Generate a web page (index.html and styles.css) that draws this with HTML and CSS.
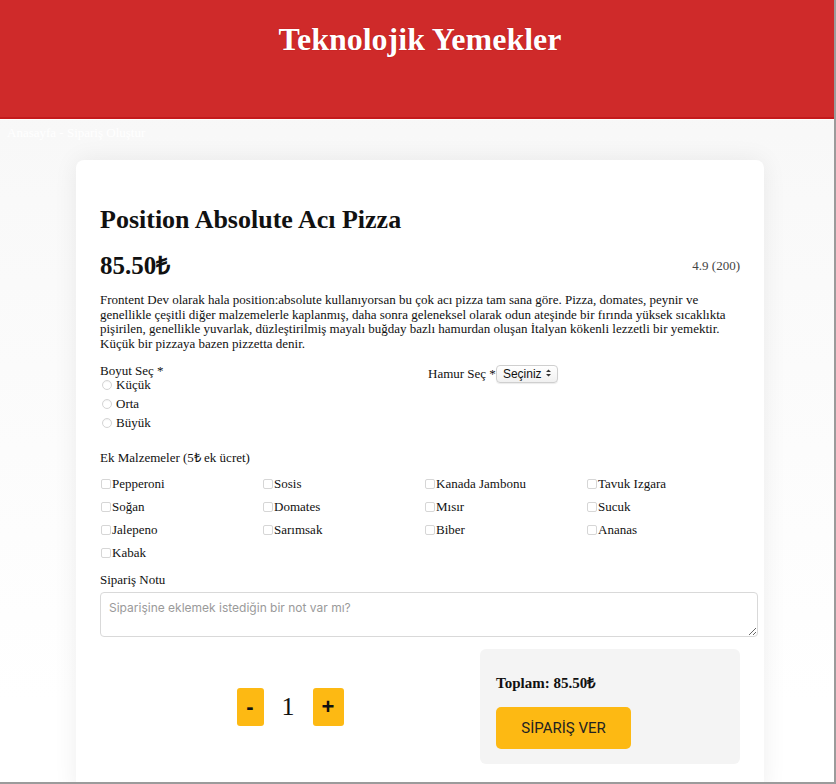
FILE: index.html
```html
<!DOCTYPE html>
<html lang="tr">
<head>
<meta charset="utf-8">
<title>Teknolojik Yemekler</title>
<link rel="stylesheet" href="styles.css">
</head>
<body>
<header class="site-header">
  <h1 class="brand">Teknolojik Yemekler</h1>
</header>
<main class="page">
  <nav class="crumbs">Anasayfa - Sipariş Oluştur</nav>
  <section class="card">
    <h2 class="product-title">Position Absolute Acı Pizza</h2>
    <div class="price-row">
      <span class="price">85.50₺</span>
      <span class="rating">4.9 (200)</span>
    </div>
    <p class="desc">Frontent Dev olarak hala position:absolute kullanıyorsan bu çok acı pizza tam sana göre. Pizza, domates, peynir ve genellikle çeşitli diğer malzemelerle kaplanmış, daha sonra geleneksel olarak odun ateşinde bir fırında yüksek sıcaklıkta pişirilen, genellikle yuvarlak, düzleştirilmiş mayalı buğday bazlı hamurdan oluşan İtalyan kökenli lezzetli bir yemektir. Küçük bir pizzaya bazen pizzetta denir.</p>

    <div class="options">
      <div class="size">
        <div class="label">Boyut Seç *</div>
        <label class="radio-row"><input type="radio" name="size" class="radio"> Küçük</label>
        <label class="radio-row"><input type="radio" name="size" class="radio"> Orta</label>
        <label class="radio-row"><input type="radio" name="size" class="radio"> Büyük</label>
      </div>
      <div class="dough">
        <span class="label">Hamur Seç *</span>
        <span class="select-wrap">
          <select class="select"><option>Seçiniz</option></select>
          <svg class="select-arrows" width="7" height="10" viewBox="0 0 7 10"><path d="M1 4 L3.5 1.5 L6 4 Z M1 6 L3.5 8.5 L6 6 Z" fill="#333"/></svg>
        </span>
      </div>
    </div>

    <div class="label extras-label">Ek Malzemeler (5₺ ek ücret)</div>
    <div class="extras">
      <label class="check"><input type="checkbox" class="box">Pepperoni</label>
      <label class="check"><input type="checkbox" class="box">Sosis</label>
      <label class="check"><input type="checkbox" class="box">Kanada Jambonu</label>
      <label class="check"><input type="checkbox" class="box">Tavuk Izgara</label>
      <label class="check"><input type="checkbox" class="box">Soğan</label>
      <label class="check"><input type="checkbox" class="box">Domates</label>
      <label class="check"><input type="checkbox" class="box">Mısır</label>
      <label class="check"><input type="checkbox" class="box">Sucuk</label>
      <label class="check"><input type="checkbox" class="box">Jalepeno</label>
      <label class="check"><input type="checkbox" class="box">Sarımsak</label>
      <label class="check"><input type="checkbox" class="box">Biber</label>
      <label class="check"><input type="checkbox" class="box">Ananas</label>
      <label class="check"><input type="checkbox" class="box">Kabak</label>
    </div>

    <div class="label note-label">Sipariş Notu</div>
    <textarea class="note" placeholder="Siparişine eklemek istediğin bir not var mı?"></textarea>

    <div class="order-row">
      <div class="counter">
        <button class="qty-btn minus">-</button>
        <span class="qty">1</span>
        <button class="qty-btn plus">+</button>
      </div>
      <div class="summary">
        <p class="total">Toplam: 85.50₺</p>
        <button class="submit">SİPARİŞ VER</button>
      </div>
    </div>
  </section>
</main>
<div class="frame"></div>
</body>
</html>
```
FILE: styles.css
```css
html, body {
  margin: 0;
  padding: 0;
}
body {
  font-family: "Liberation Serif", "Times New Roman", serif;
  color: #111;
  background: linear-gradient(#f6f6f6 0px, #f9f9f9 200px, #ffffff 700px);
  min-height: 784px;
}
.site-header {
  background: #cf2a2a;
  height: 117px;
  border-bottom: 2px solid #c41a1c;
  box-shadow: 0 1px 0 #ffffff;
  display: flex;
  justify-content: center;
}
.brand {
  margin: 20px 0 0 4px;
  color: #fff;
  font-size: 32px;
  line-height: 38px;
  font-weight: bold;
  text-shadow: 0 0 1px #a40000;
}
.crumbs {
  color: #fff;
  font-size: 13px;
  line-height: 16px;
  padding: 6px 0 0 7px;
  height: 20px;
}
.card {
  background: #fff;
  width: 640px;
  margin: 15px 0 0 calc(50% - 342px);
  padding: 24px 24px 30px;
  border-radius: 8px;
  box-shadow: 0 0 24px rgba(0, 0, 0, 0.07);
}
.product-title {
  margin: 20px 0 0;
  font-size: 26px;
  line-height: 32px;
  font-weight: bold;
}
.price-row {
  display: flex;
  justify-content: space-between;
  align-items: center;
  margin-top: 15px;
}
.price {
  font-size: 25px;
  line-height: 30px;
  font-weight: bold;
}
.rating {
  font-size: 13px;
  color: #444;
}
.desc {
  margin: 12px 0 0;
  font-size: 13px;
  line-height: 14.5px;
}
.options {
  display: grid;
  grid-template-columns: 1fr 1fr;
  column-gap: 16px;
  margin-top: 12px;
}
.label {
  font-size: 13px;
  line-height: 15px;
}
.radio-row {
  display: flex;
  align-items: center;
  font-size: 13px;
  height: 19px;
}
.size .radio-row:first-of-type {
  margin-top: -3px;
}
.radio {
  -webkit-appearance: none;
  appearance: none;
  width: 10px;
  height: 10px;
  border: 1px solid #d4d4d4;
  border-radius: 50%;
  background: #fff;
  margin: 0 4px 0 2px;
  box-shadow: inset 0 1px 1px rgba(0,0,0,0.05);
}
.dough {
  display: flex;
  align-items: center;
  height: 18px;
  margin-top: 1px;
}
.dough .label {
  margin-right: 0;
}
.select-wrap {
  position: relative;
  display: inline-block;
}
.select {
  -webkit-appearance: none;
  appearance: none;
  height: 18px;
  width: 62px;
  padding: 0 0 0 6px;
  font-family: "Liberation Sans", Arial, sans-serif;
  font-size: 12px;
  color: #111;
  border: 1px solid #cfcfcf;
  border-radius: 4px;
  background: linear-gradient(#ffffff, #f0f0f0);
  box-shadow: 0 1px 1px rgba(0,0,0,0.08);
}
.select-arrows {
  position: absolute;
  right: 6px;
  top: 4px;
}
.extras-label {
  margin-top: 18px;
}
.extras {
  display: grid;
  grid-template-columns: repeat(4, 1fr);
  column-gap: 8px;
  margin-top: 7px;
}
.check {
  display: flex;
  align-items: center;
  font-size: 13px;
  height: 23px;
}
.box {
  -webkit-appearance: none;
  appearance: none;
  width: 10px;
  height: 10px;
  border: 1px solid #d6d6d6;
  border-radius: 2px;
  background: #fff;
  margin: 0 1px 0 1px;
}
.note-label {
  margin-top: 8px;
}
.note {
  display: block;
  width: 100%;
  box-sizing: content-box;
  height: 27px;
  margin-top: 5px;
  padding: 8px;
  border: 1px solid #d9d9d9;
  border-radius: 4px;
  font-family: "Inter", "Liberation Sans", sans-serif;
  font-size: 12px;
  line-height: 14px;
  resize: vertical;
}
.note::placeholder {
  color: #9a9a9a;
}
.order-row {
  display: flex;
  align-items: center;
  margin-top: 12px;
}
.counter {
  flex: 1;
  display: flex;
  justify-content: center;
  align-items: center;
  gap: 18px;
}
.qty-btn {
  background: #fdb913;
  border: none;
  border-radius: 3px;
  height: 38px;
  padding: 0;
  font-family: "Liberation Sans", Arial, sans-serif;
  font-weight: bold;
  font-size: 22px;
  color: #111;
}
.minus {
  width: 27px;
}
.plus {
  width: 31px;
}
.qty {
  font-size: 26px;
  line-height: 30px;
}
.summary {
  width: 228px;
  background: #f4f4f4;
  border-radius: 6px;
  padding: 16px 16px 15px;
}
.total {
  margin: 9px 0 15px;
  font-size: 15px;
  line-height: 18px;
  font-weight: bold;
}
.submit {
  display: block;
  width: 135px;
  height: 42px;
  background: #fdb913;
  border: none;
  border-radius: 5px;
  font-family: "Roboto", "Liberation Sans", sans-serif;
  font-size: 15px;
  color: #222;
  padding: 0;
}
.frame {
  position: fixed;
  inset: 0;
  border-right: 2px solid #9b9b9b;
  border-bottom: 2px solid #9b9b9b;
  pointer-events: none;
}
```
